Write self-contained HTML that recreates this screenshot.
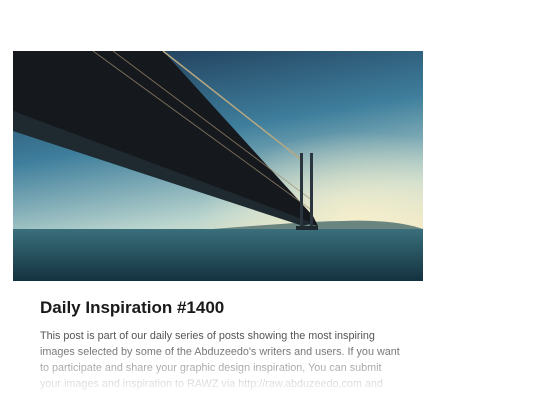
<!DOCTYPE html>
<html><head><style>
body{margin:0;background:#fff;width:555px;height:420px;overflow:hidden;font-family:"Liberation Sans",sans-serif}
svg{position:absolute;left:13px;top:51px}
h1{position:absolute;left:40px;top:298px;margin:0;font-size:17px;font-weight:bold;color:#1a1a1a;letter-spacing:0}
.p{position:absolute;left:40px;top:328px;width:380px;font-size:10.8px;line-height:16px;color:#555;
-webkit-mask-image:linear-gradient(#000 20%,rgba(0,0,0,.15) 90%);}
.p div{white-space:nowrap}
</style></head><body>
<svg width="410" height="230" viewBox="0 0 410 230">
<defs>
<linearGradient id="sky" x1="0" y1="0" x2="0.3" y2="1">
<stop offset="0" stop-color="#1c3450"/><stop offset="0.45" stop-color="#3e7e9c"/><stop offset="0.8" stop-color="#bcd6cf"/><stop offset="1" stop-color="#efe6c4"/></linearGradient>
<radialGradient id="sun" cx="0.85" cy="0.75" r="0.4"><stop offset="0" stop-color="#f6efcc"/><stop offset="1" stop-color="#f6efcc" stop-opacity="0"/></radialGradient>
<linearGradient id="sea" x1="0" y1="0" x2="0" y2="1"><stop offset="0" stop-color="#3a6f7c"/><stop offset="1" stop-color="#14323f"/></linearGradient>
</defs>
<rect width="410" height="230" fill="url(#sky)"/>
<rect width="410" height="230" fill="url(#sun)"/>
<path d="M200 178 Q300 170 330 170 Q380 168 410 178 L410 182 L200 182Z" fill="#6a8580"/>
<rect y="178" width="410" height="52" fill="url(#sea)"/>
<path d="M0 0 L150 0 L300 165 L305 175 L290 172 L0 60Z" fill="#15181c"/>
<path d="M0 60 L0 80 L290 175 L300 172Z" fill="#1e2a30"/>
<path d="M150 0 L290 110" stroke="#b8a880" stroke-width="1.5"/>
<path d="M80 0 L300 160 M100 0 L300 150" stroke="#a08f70" stroke-width="1" opacity=".7"/>
<rect x="287" y="102" width="3" height="75" fill="#2a3540"/><rect x="297" y="102" width="3" height="75" fill="#2a3540"/>
<rect x="283" y="175" width="22" height="4" fill="#1e2a30"/>
</svg>
<h1>Daily Inspiration #1400</h1>
<div class="p">
<div>This post is part of our daily series of posts showing the most inspiring</div>
<div>images selected by some of the Abduzeedo's writers and users. If you want</div>
<div>to participate and share your graphic design inspiration, You can submit</div>
<div>your images and inspiration to RAWZ via http://raw.abduzeedo.com and</div>
</div>
</body></html>
